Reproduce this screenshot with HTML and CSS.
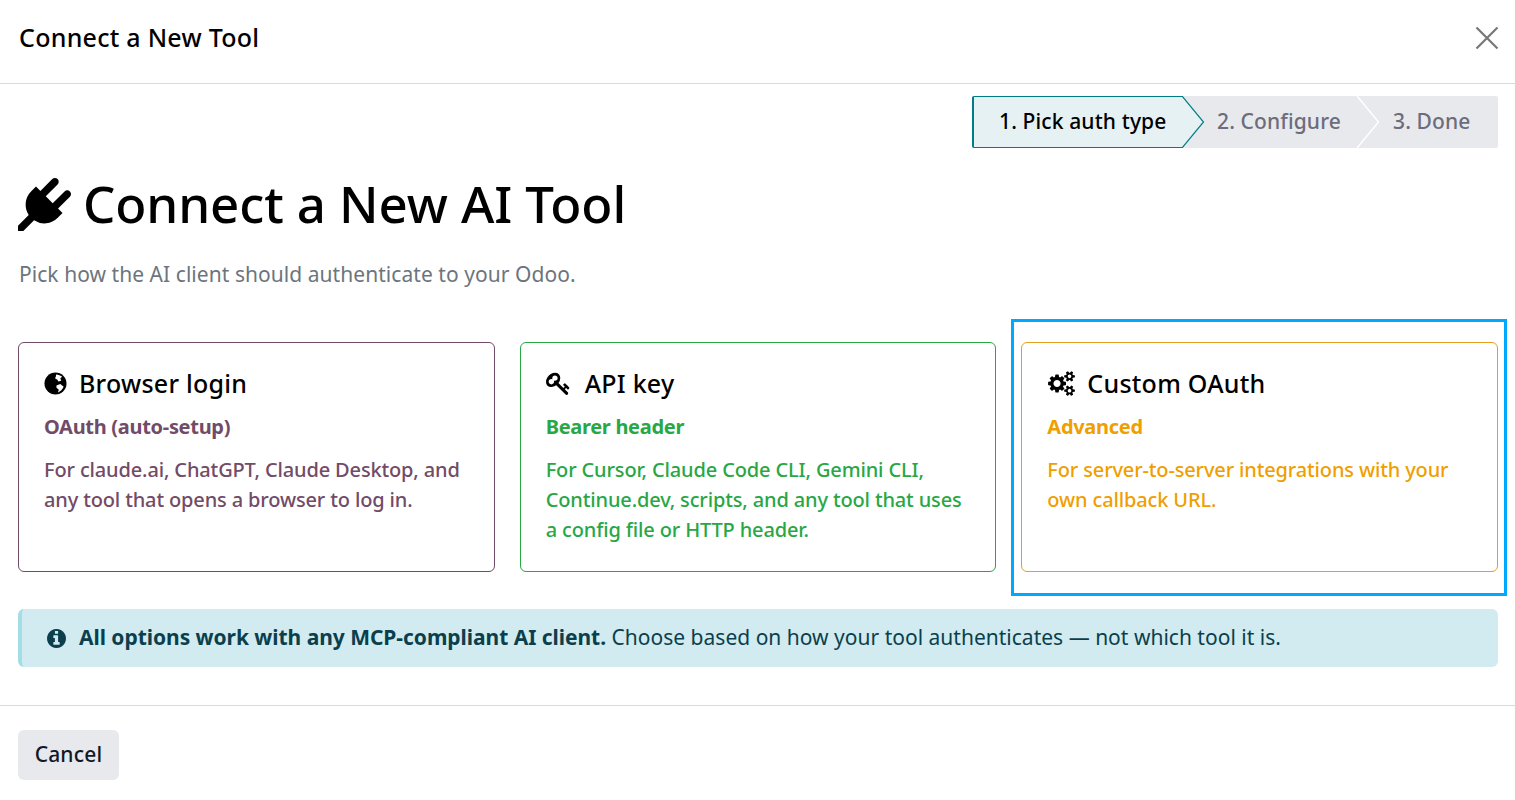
FILE: index.html
```html
<!DOCTYPE html>
<html lang="en">
<head>
  <meta charset="UTF-8">
  <title>Connect a New Tool</title>
  <link rel="stylesheet" href="styles.css">
</head>

<body>
  <div class="modal">
    <header class="modal-header">
      <h4>Connect a New Tool</h4>
      <svg class="close-icon" viewBox="0 0 24 24" aria-label="Close"><path d="M1.5 1.5 22.5 22.5M22.5 1.5 1.5 22.5"/></svg>
    </header>

    <main class="modal-body">
      <div class="steps-row">
        <div class="steps">
          <div class="step step-active">
            1. Pick auth type
            <svg class="arrow" viewBox="0 0 22 52"><path class="arrow-active" d="M0 .5H.5L21.5 26 .5 51.5H0"/></svg>
          </div>
          <div class="step step-second">
            2. Configure
            <svg class="arrow" viewBox="0 0 22 52"><path class="arrow-white" d="M0 0 21.5 26 0 52"/></svg>
          </div>
          <div class="step step-third">3. Done</div>
        </div>
      </div>

      <h1 class="title">
        <svg class="plug-icon" viewBox="0 0 1792 1792"><path d="M1755 453q37 38 37 90.5t-37 90.5l-401 400 150 150-160 160q-163 163-389.5 186.5t-411.5-100.5l-362 362h-181v-181l362-362q-124-185-100.5-411.5t186.5-389.5l160-160 150 150 400-401q38-37 91-37t90 37 37 90.5-37 90.5l-400 401 234 234 401-400q38-37 91-37t90 37z"/></svg>
        Connect a New AI Tool
      </h1>
      <p class="subtitle">Pick how the AI client should authenticate to your Odoo.</p>

      <div class="cards">
        <div class="card card-purple">
          <h5>
            <svg class="card-icon globe-icon" viewBox="0 0 24 24"><circle cx="12" cy="12" r="11.5"/><path class="land" d="M12.5 2.500c2.500 0 5 1 6.500 2.500l-2 1.500 1 2.500-3 1-1-2-2.500-1.500 1-2zM13 14l4-1.500 3.500 3c-1 2.500-3.500 5-6 6l1-3-2.500-2z"/></svg>
            Browser login
          </h5>
          <div class="card-sub">OAuth (auto-setup)</div>
          <p>For claude.ai, ChatGPT, Claude Desktop, and any tool that opens a browser to log in.</p>
        </div>

        <div class="card card-green">
          <h5>
            <svg class="card-icon key-icon" viewBox="0 0 1792 1792"><path d="M832 512q0-80-56-136t-136-56-136 56-56 136q0 42 19 83-41-19-83-19-80 0-136 56t-56 136 56 136 136 56 136-56 56-136q0-42-19-83 41 19 83 19 80 0 136-56t56-136zm851 704q0 17-49 66t-66 49q-9 0-28.5-16t-36.5-33-38.5-40-24.5-26l-96 96 220 220q28 28 28 68 0 42-39 81t-81 39q-40 0-68-28l-671-671q-176 131-365 131-163 0-265.5-102.5t-102.5-265.5q0-160 95-313t248-248 313-95q163 0 265.5 102.5t102.5 265.5q0 189-131 365l355 355 96-96q-3-3-26-24.5t-40-38.5-33-36.5-16-28.5q0-17 49-66t66-49q13 0 23 10 6 6 46 44.5t82 79.5 86.5 86 73 78 28.5 41z"/></svg>
            API key
          </h5>
          <div class="card-sub">Bearer header</div>
          <p>For Cursor, Claude Code CLI, Gemini CLI, Continue.dev, scripts, and any tool that uses a config file or HTTP header.</p>
        </div>

        <div class="card card-orange">
          <h5>
            <svg class="card-icon cogs-icon" viewBox="0 0 2048 1792"><path d="M960 896q0-106-75-181t-181-75-181 75-75 181 75 181 181 75 181-75 75-181zm768 512q0-52-38-90t-90-38-90 38-38 90q0 53 37.500 90.500t90.500 37.500 90.500-37.500 37.500-90.500zm0-1024q0-52-38-90t-90-38-90 38-38 90q0 53 37.500 90.500t90.500 37.500 90.500-37.500 37.500-90.500zm-384 421v185q0 10-7 19.500t-16 10.500l-155 24q-11 35-32 76 34 48 90 115 7 11 7 20 0 12-7 19-23 30-82.500 89.500t-78.500 59.500q-11 0-21-7l-115-90q-37 19-77 31-11 108-23 155-7 24-30 24h-186q-11 0-20-7.500t-10-17.500l-23-153q-34-10-75-31l-118 89q-7 7-20 7-11 0-21-8-144-133-144-160 0-9 7-19 10-14 41-53t47-61q-23-44-35-82l-152-24q-10-1-17-9.500t-7-19.500v-185q0-10 7-19.500t16-10.500l155-24q11-35 32-76-34-48-90-115-7-11-7-20 0-12 7-20 22-30 82-89t79-59q11 0 21 7l115 90q34-18 77-32 11-108 23-154 7-24 30-24h186q11 0 20 7.500t10 17.500l23 153q34 10 75 31l118-89q8-7 20-7 11 0 21 8 144 133 144 160 0 8-7 19-12 16-42 54t-45 60q23 48 34 82l152 23q10 2 17 10.500t7 19.500zm640 533v140q0 16-149 31-12 27-30 52 51 113 51 138 0 4-4 7-122 71-124 71-8 0-46-47t-52-68q-20 2-30 2t-30-2q-14 21-52 68t-46 47q-2 0-124-71-4-3-4-7 0-25 51-138-18-25-30-52-149-15-149-31v-140q0-16 149-31 13-29 30-52-51-113-51-138 0-4 4-7 4-2 35-20t59-34 30-16q8 0 46 46.500t52 67.500q20-2 30-2t30 2q51-71 92-112l6-2q4 0 124 70 4 3 4 7 0 25-51 138 17 23 30 52 149 15 149 31zm0-1024v140q0 16-149 31-12 27-30 52 51 113 51 138 0 4-4 7-122 71-124 71-8 0-46-47t-52-68q-20 2-30 2t-30-2q-14 21-52 68t-46 47q-2 0-124-71-4-3-4-7 0-25 51-138-18-25-30-52-149-15-149-31v-140q0-16 149-31 13-29 30-52-51-113-51-138 0-4 4-7 4-2 35-20t59-34 30-16q8 0 46 46.500t52 67.500q20-2 30-2t30 2q51-71 92-112l6-2q4 0 124 70 4 3 4 7 0 25-51 138 17 23 30 52 149 15 149 31z"/></svg>
            Custom OAuth
          </h5>
          <div class="card-sub">Advanced</div>
          <p>For server-to-server integrations with your own callback URL.</p>
        </div>
      </div>

      <div class="alert">
        <svg class="info-icon" viewBox="128 128 1536 1536"><path d="M1152 1376v-160q0-14-9-23t-23-9h-96v-512q0-14-9-23t-23-9h-320q-14 0-23 9t-9 23v160q0 14 9 23t23 9h96v320h-96q-14 0-23 9t-9 23v160q0 14 9 23t23 9h448q14 0 23-9t9-23zm-128-896v-160q0-14-9-23t-23-9h-192q-14 0-23 9t-9 23v160q0 14 9 23t23 9h192q14 0 23-9t9-23zm640 416q0 209-103 385.500t-279.500 279.500-385.500 103-385.500-103-279.500-279.500-103-385.500 103-385.500 279.500-279.500 385.500-103 385.500 103 279.500 279.500 103 385.500z"/></svg>
        <span class="alert-text"><strong>All options work with any MCP-compliant AI client.</strong> Choose based on how your tool authenticates — not which tool it is.</span>
      </div>
    </main>

    <footer class="modal-footer">
      <button class="btn-cancel">Cancel</button>
    </footer>
  </div>
</body>
</html>
```

FILE: styles.css
```css
* {
  box-sizing: border-box;
}

body {
  margin: 0;
  font-family: "Noto Sans", sans-serif;
  background: #fff;
  color: #000;
}

.modal {
  width: 1515px;
  height: 800px;
  overflow: hidden;
}

.modal-header {
  height: 84px;
  padding: 0 16px 8px 19px;
  border-bottom: 1px solid #d8dadd;
  display: flex;
  align-items: center;
  justify-content: space-between;
}

.modal-header h4 {
  margin: 0 0 2px;
  font-size: 25px;
  font-weight: 500;
  letter-spacing: 0.27px;
}

.close-icon {
  width: 24px;
  height: 24px;
  fill: none;
  stroke: #777;
  stroke-width: 2.2;
}

.modal-body {
  height: 621px;
  padding: 12px 17px 0 18px;
}

.steps-row {
  display: flex;
  justify-content: flex-end;
}

.steps {
  display: flex;
  height: 52px;
  width: 526px;
  background: #e7e9ed;
  border-radius: 2px;
  font-size: 21px;
  font-weight: 500;
  letter-spacing: 0.13px;
  color: #6c6c7c;
}

.step {
  position: relative;
  display: flex;
  align-items: center;
  padding-bottom: 2px;
}

.step-active {
  width: 210px;
  padding-left: 25px;
  color: #000;
  background: #e6f1f4;
  border: 1px solid #017e84;
  border-left-width: 2px;
  border-right: none;
  border-radius: 2px 0 0 2px;
}

.step-second {
  width: 175px;
  padding-left: 35px;
}

.step-third {
  padding-left: 36px;
}

.arrow {
  position: absolute;
  top: 0;
  right: -22px;
  width: 22px;
  height: 52px;
  overflow: visible;
}

.step-active .arrow {
  top: -1px;
}

.arrow-active {
  fill: #e6f1f4;
  stroke: #017e84;
  stroke-width: 1.2;
}

.arrow-white {
  fill: none;
  stroke: #fff;
  stroke-width: 1.5;
}

.title {
  margin: 24px 0 0;
  height: 62px;
  display: flex;
  align-items: center;
  gap: 12px;
  font-size: 51px;
  font-weight: 500;
  letter-spacing: -0.1px;
}

.plug-icon {
  width: 53px;
  height: 53px;
  margin-top: 2px;
}

.subtitle {
  margin: 25px 0 0;
  padding-left: 1px;
  font-size: 21px;
  line-height: 30px;
  letter-spacing: 0.05px;
  color: #6c757d;
}

.cards {
  margin-top: 53px;
  display: flex;
  gap: 25px;
}

.card {
  position: relative;
  flex: 1;
  height: 230px;
  padding: 21px 25px;
  border: 1px solid;
  border-radius: 6px;
}

.card h5 {
  margin: 0;
  height: 38px;
  display: flex;
  align-items: center;
  gap: 11px;
  font-size: 25px;
  font-weight: 500;
  letter-spacing: 0.25px;
  color: #000;
}

.card-icon {
  width: 25px;
  height: 25px;
}

.globe-icon {
  width: 23px;
  height: 23px;
  margin-right: 1px;
}

.globe-icon .land {
  fill: #fff;
}

.key-icon {
  margin-right: 3px;
}

.cogs-icon {
  width: 29px;
}

.card-sub {
  margin-top: 10px;
  font-size: 20px;
  line-height: 30px;
  font-weight: 700;
  letter-spacing: -0.3px;
}

.card p {
  margin: 13px 0 0;
  font-size: 20px;
  line-height: 30px;
  font-weight: 500;
  letter-spacing: -0.14px;
}

.card-purple {
  border-color: #714b67;
  color: #714b67;
}

.card-green {
  border-color: #28a745;
  color: #28a745;
}

.card-orange {
  border-color: #e6a020;
  color: #ef9f00;
}

/* highlight frame around the last card */
.card-orange::after {
  content: "";
  position: absolute;
  top: -24px;
  left: -11px;
  right: -10px;
  bottom: -25px;
  border: 3px solid #00a8ff;
}

.alert {
  margin-top: 37px;
  height: 58px;
  padding-left: 25px;
  display: flex;
  align-items: center;
  gap: 13px;
  background: #d1ebf0;
  border-left: 4px solid #a5dde6;
  border-radius: 6px;
  font-size: 21px;
  letter-spacing: 0.01px;
  color: #0b3f4d;
}

.alert-text {
  margin-bottom: 2px;
}

.alert-text strong {
  letter-spacing: -0.04px;
}

.info-icon {
  width: 19px;
  height: 19px;
  fill: #0b3f4d;
}

.modal-footer {
  height: 95px;
  padding: 24px 18px;
  border-top: 1px solid #d8dadd;
}

.btn-cancel {
  width: 101px;
  height: 50px;
  padding: 0 0 2px;
  border: none;
  border-radius: 6px;
  background: #e7e9ed;
  font-family: inherit;
  font-size: 21px;
  font-weight: 500;
  letter-spacing: 0.2px;
  color: #111827;
}
```
